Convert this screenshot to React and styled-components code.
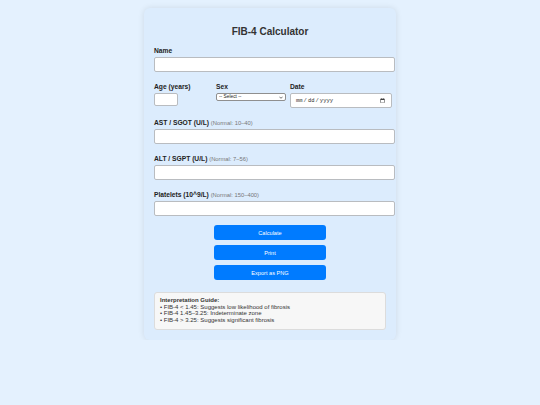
import React from 'react'
import styled, { createGlobalStyle } from 'styled-components'

const GlobalStyle = createGlobalStyle`
  html, body {
    margin: 0;
    background: #e4f1fe;
    font-family: 'Liberation Sans', Arial, sans-serif;
  }
`

export default function App() {
  return (
    <>
      <GlobalStyle />
      <Page>
        <Card>
          <Title>FIB-4 Calculator</Title>

          <Field>
            <Label>Name</Label>
            <TextInput type="text" />
          </Field>

          <Row>
            <Column $width={58}>
              <Label>Age (years)</Label>
              <AgeInput type="number" />
            </Column>
            <Column $width={70}>
              <Label>Sex</Label>
              <SelectWrap>
                <Select defaultValue="">
                  <option value="">-- Select --</option>
                  <option value="m">Male</option>
                  <option value="f">Female</option>
                </Select>
                <Chevron viewBox="0 0 10 6" aria-hidden="true">
                  <path d="M1 1l4 4 4-4" fill="none" stroke="#222" strokeWidth="1.6" />
                </Chevron>
              </SelectWrap>
            </Column>
            <Column $width={102}>
              <Label>Date</Label>
              <DateInput type="date" />
            </Column>
          </Row>

          <Field>
            <Label>AST / SGOT (U/L) <Hint>(Normal: 10–40)</Hint></Label>
            <TextInput type="number" />
          </Field>

          <Field>
            <Label>ALT / SGPT (U/L) <Hint>(Normal: 7–56)</Hint></Label>
            <TextInput type="number" />
          </Field>

          <Field $last>
            <Label>Platelets (10^9/L) <Hint>(Normal: 150–400)</Hint></Label>
            <TextInput type="number" />
          </Field>

          <ButtonStack>
            <Button>Calculate</Button>
            <Button>Print</Button>
            <Button>Export as PNG</Button>
          </ButtonStack>

          <Guide>
            <strong>Interpretation Guide:</strong><br />
            • FIB-4 &lt; 1.45: Suggests low likelihood of fibrosis<br />
            • FIB-4 1.45–3.25: Indeterminate zone<br />
            • FIB-4 &gt; 3.25: Suggests significant fibrosis
          </Guide>
        </Card>
      </Page>
    </>
  )
}

const Page = styled.div`
  padding-top: 8px;
  display: flex;
  justify-content: center;
`

const Card = styled.div`
  width: 232px;
  padding: 10px;
  background: #dcecfd;
  border-radius: 6px;
  box-shadow: 0 0 6px rgba(0, 0, 0, 0.1);
`

const Title = styled.h2`
  margin: 8px 0 9px;
  font-size: 10px;
  line-height: 12px;
  font-weight: 700;
  text-align: center;
  color: #333;
`

const Field = styled.div`
  margin-bottom: ${p => (p.$last ? 9 : 11)}px;
`

const Label = styled.label`
  display: block;
  margin-bottom: 2px;
  font-size: 6.7px;
  line-height: 8px;
  font-weight: 700;
  color: #222;
  white-space: nowrap;
`

const Hint = styled.span`
  font-size: 5.8px;
  font-weight: 400;
  color: #777;
`

const TextInput = styled.input`
  display: block;
  width: 100%;
  height: 13px;
  padding: 0 3.5px;
  border: 1px solid #b9bcc0;
  border-radius: 2px;
  background: #fff;
  font-size: 6px;
  font-family: inherit;
`

const Row = styled.div`
  display: flex;
  gap: 4px;
  margin-bottom: 11px;
`

const Column = styled.div`
  width: ${p => p.$width}px;
  flex-shrink: 0;
`

const AgeInput = styled.input`
  display: block;
  box-sizing: border-box;
  width: 24px;
  height: 13px;
  padding: 0 2px;
  border: 1px solid #b9bcc0;
  border-radius: 2px;
  background: #fff;
  font-size: 6px;
`

const SelectWrap = styled.div`
  position: relative;
  width: 70px;
  height: 8px;
`

const Select = styled.select`
  display: block;
  box-sizing: border-box;
  width: 100%;
  height: 100%;
  padding: 0 8px 0 2px;
  border: 1px solid #8f8f8f;
  border-radius: 2px;
  background: #fff;
  font-size: 4.8px;
  line-height: 6px;
  font-family: inherit;
  color: #222;
  appearance: none;
  -webkit-appearance: none;
`

const Chevron = styled.svg`
  position: absolute;
  right: 3px;
  top: 2.5px;
  width: 4px;
  height: 3px;
  pointer-events: none;
`

const DateInput = styled.input`
  display: block;
  box-sizing: border-box;
  width: 102px;
  height: 15px;
  padding: 0 4px;
  border: 1px solid #b9bcc0;
  border-radius: 2px;
  background: #fff;
  font-size: 5.5px;
  font-family: 'Liberation Mono', monospace;
  color: #333;
`

const ButtonStack = styled.div`
  display: flex;
  flex-direction: column;
  align-items: center;
  gap: 5px;
`

const Button = styled.button`
  width: 112px;
  height: 15px;
  padding: 0;
  border: none;
  border-radius: 3px;
  background: #007bff;
  color: #fff;
  font-size: 5.6px;
  font-family: 'Liberation Sans', Arial, sans-serif;
  cursor: pointer;
`

const Guide = styled.div`
  margin-top: 12px;
  padding: 4px 5px 5px;
  background: #f7f7f7;
  border: 1px solid #dcdcdc;
  border-radius: 3px;
  font-size: 6px;
  line-height: 6.7px;
  color: #333;
`
